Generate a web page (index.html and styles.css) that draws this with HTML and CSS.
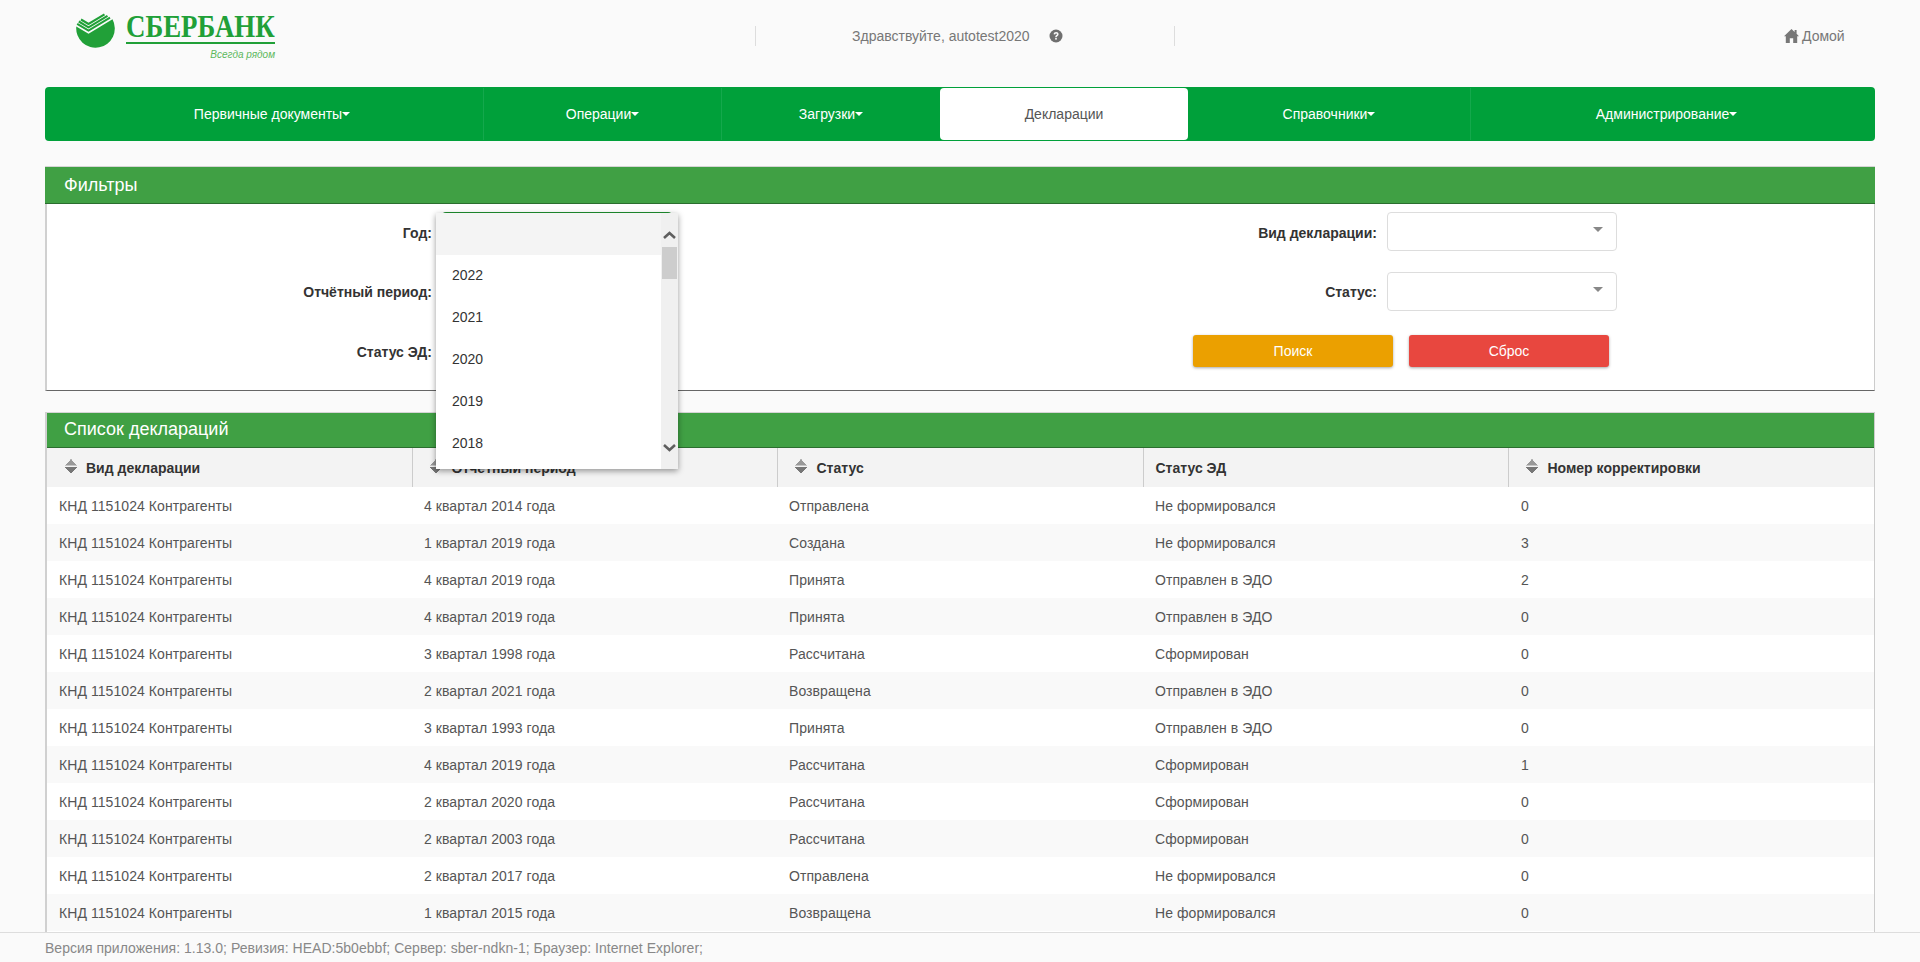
FILE: index.html
```html
<!DOCTYPE html>
<html lang="ru">
<head>
  <meta charset="UTF-8">
  <title>Декларации</title>
  <link rel="stylesheet" href="styles.css">
</head>
<body>
  <div class="page">
    <header class="top">
      <a class="logo" href="#">
        <svg class="logo-mark" viewBox="0 0 40 38" width="40" height="38">
          <path d="M0.3 16.5 L12.5 23.7 L36.5 9.3 A19.3 19.3 0 1 1 0.3 16.5 Z" fill="#21a038"/>
          <g fill="none" stroke="#21a038" stroke-width="2.1">
            <path d="M1.2 13.8 L12.5 20.6 L34 7.7"/>
            <path d="M2.8 11.5 L12.5 17.3 L31.5 5.9"/>
            <path d="M5 9.5 L12.5 14 L28.5 4.4"/>
          </g>
        </svg>
        <div class="logo-text">
          <div class="logo-name"><span>СБЕРБАНК</span></div>
          <div class="logo-slogan">Всегда рядом</div>
        </div>
      </a>
      <div class="greeting">
        <span>Здравствуйте, autotest2020</span>
        <svg class="help-icon" viewBox="0 0 14 14" width="14" height="14">
          <circle cx="7" cy="7" r="6.5" fill="#6f6f6f"/>
          <path d="M4.6 5.3 C4.7 3.8 5.8 3.1 7.1 3.1 C8.5 3.1 9.6 3.9 9.6 5.2 C9.6 6.9 7.7 6.9 7.7 8.2 L6.2 8.2 C6.2 6.2 8 6.3 8 5.3 C8 4.8 7.6 4.5 7.1 4.5 C6.5 4.5 6.2 4.9 6.1 5.5 Z" fill="#fafafa"/>
          <rect x="6.2" y="9" width="1.6" height="1.6" fill="#fafafa"/>
        </svg>
      </div>
      <a class="home" href="#">
        <svg viewBox="0 0 15 14" width="15" height="14">
          <path d="M7.5 0 L10.6 2.9 L10.6 1 L12.6 1 L12.6 4.8 L15 7.2 L13.2 7.2 L13.2 14 L9.2 14 L9.2 9.2 L5.8 9.2 L5.8 14 L1.8 14 L1.8 7.2 L0 7.2 Z" fill="#777"/>
        </svg>
        <span>Домой</span>
      </a>
    </header>

    <nav class="menu">
      <a class="menu-item has-caret" href="#">Первичные документы</a>
      <a class="menu-item has-caret" href="#">Операции</a>
      <a class="menu-item has-caret" href="#">Загрузки</a>
      <a class="menu-item active" href="#">Декларации</a>
      <a class="menu-item has-caret" href="#">Справочники</a>
      <a class="menu-item has-caret" href="#">Администрирование</a>
    </nav>

    <section class="panel filters">
      <h2 class="panel-title">Фильтры</h2>
      <div class="filter-body">
        <div class="filter-col">
          <div class="field"><label>Год:</label><div class="select year-select"></div></div>
          <div class="field"><label>Отчётный период:</label><div class="select"></div></div>
          <div class="field"><label>Статус ЭД:</label><div class="select"></div></div>
        </div>
        <div class="filter-col filter-col-right">
          <div class="field"><label>Вид декларации:</label><div class="select"><span class="select-caret"></span></div></div>
          <div class="field"><label>Статус:</label><div class="select"><span class="select-caret"></span></div></div>
          <div class="buttons">
            <button class="btn btn-search">Поиск</button>
            <button class="btn btn-reset">Сброс</button>
          </div>
        </div>
      </div>
    </section>

    <section class="panel list">
      <h2 class="panel-title">Список деклараций</h2>
      <table class="grid">
        <colgroup>
          <col class="col-type"><col class="col-period"><col class="col-status"><col class="col-ed"><col>
        </colgroup>
        <thead>
          <tr>
            <th><span class="sort"></span>Вид декларации</th>
            <th><span class="sort"></span>Отчётный период</th>
            <th><span class="sort"></span>Статус</th>
            <th>Статус ЭД</th>
            <th><span class="sort"></span>Номер корректировки</th>
          </tr>
        </thead>
        <tbody>
          <tr><td>КНД 1151024 Контрагенты</td><td>4 квартал 2014 года</td><td>Отправлена</td><td>Не формировался</td><td>0</td></tr>
          <tr><td>КНД 1151024 Контрагенты</td><td>1 квартал 2019 года</td><td>Создана</td><td>Не формировался</td><td>3</td></tr>
          <tr><td>КНД 1151024 Контрагенты</td><td>4 квартал 2019 года</td><td>Принята</td><td>Отправлен в ЭДО</td><td>2</td></tr>
          <tr><td>КНД 1151024 Контрагенты</td><td>4 квартал 2019 года</td><td>Принята</td><td>Отправлен в ЭДО</td><td>0</td></tr>
          <tr><td>КНД 1151024 Контрагенты</td><td>3 квартал 1998 года</td><td>Рассчитана</td><td>Сформирован</td><td>0</td></tr>
          <tr><td>КНД 1151024 Контрагенты</td><td>2 квартал 2021 года</td><td>Возвращена</td><td>Отправлен в ЭДО</td><td>0</td></tr>
          <tr><td>КНД 1151024 Контрагенты</td><td>3 квартал 1993 года</td><td>Принята</td><td>Отправлен в ЭДО</td><td>0</td></tr>
          <tr><td>КНД 1151024 Контрагенты</td><td>4 квартал 2019 года</td><td>Рассчитана</td><td>Сформирован</td><td>1</td></tr>
          <tr><td>КНД 1151024 Контрагенты</td><td>2 квартал 2020 года</td><td>Рассчитана</td><td>Сформирован</td><td>0</td></tr>
          <tr><td>КНД 1151024 Контрагенты</td><td>2 квартал 2003 года</td><td>Рассчитана</td><td>Сформирован</td><td>0</td></tr>
          <tr><td>КНД 1151024 Контрагенты</td><td>2 квартал 2017 года</td><td>Отправлена</td><td>Не формировался</td><td>0</td></tr>
          <tr><td>КНД 1151024 Контрагенты</td><td>1 квартал 2015 года</td><td>Возвращена</td><td>Не формировался</td><td>0</td></tr>
        </tbody>
      </table>
    </section>

    <footer class="footer">Версия приложения: 1.13.0; Ревизия: HEAD:5b0ebbf; Сервер: sber-ndkn-1; Браузер: Internet Explorer;</footer>
  </div>

  <!-- open dropdown of the year select -->
  <div class="dropdown">
    <ul class="dropdown-list">
      <li class="selected"></li>
      <li>2022</li>
      <li>2021</li>
      <li>2020</li>
      <li>2019</li>
      <li>2018</li>
    </ul>
    <div class="scrollbar">
      <svg class="scroll-arrow" viewBox="0 0 13 8" width="13" height="8"><path d="M1 7 L6.5 2 L12 7" fill="none" stroke="#5f5f5f" stroke-width="2.6"/></svg>
      <div class="scroll-track"><div class="scroll-thumb"></div></div>
      <svg class="scroll-arrow" viewBox="0 0 13 8" width="13" height="8"><path d="M1 1 L6.5 6 L12 1" fill="none" stroke="#5f5f5f" stroke-width="2.6"/></svg>
    </div>
  </div>
</body>
</html>
```

FILE: styles.css
```css
* {
  box-sizing: border-box;
}

html, body {
  margin: 0;
  height: 100%;
  overflow: hidden;
}

body {
  background: #fafafa;
  color: #333;
  font-family: "Liberation Sans", Arial, sans-serif;
  font-size: 14px;
}

a {
  text-decoration: none;
}

.page {
  height: 962px;
  display: flex;
  flex-direction: column;
}

/* top line */
.top {
  height: 87px;
  flex: none;
  display: flex;
  align-items: flex-start;
  color: #777;
}

.logo {
  width: 755px;
  padding: 10px 0 0 76px;
  display: flex;
  gap: 10px;
}

.logo-text {
  width: 149px;
}

.logo-name {
  font-family: "Liberation Serif", serif;
  font-size: 32px;
  font-weight: bold;
  line-height: 30px;
  height: 34px;
  padding-top: 1px;
  color: #21a038;
  border-bottom: 2px solid #21a038;
  white-space: nowrap;
}

.logo-name span {
  display: inline-block;
  transform: scaleX(0.84);
  transform-origin: left;
}

.logo-slogan {
  margin-top: 5px;
  font-size: 10px;
  font-style: italic;
  line-height: 12px;
  text-align: right;
  color: #5cb85c;
}

.greeting {
  width: 420px;
  height: 20px;
  margin-top: 26px;
  border-left: 1px solid #ddd;
  border-right: 1px solid #ddd;
  padding-left: 96px;
  display: flex;
  align-items: center;
  gap: 19px;
}

.home {
  margin: 28px 0 0 609px;
  color: #777;
  display: flex;
  align-items: center;
  gap: 3px;
}

/* main menu */
.menu {
  flex: none;
  height: 54px;
  margin: 0 45px;
  padding: 1px 0;
  background: #00a03a;
  border-radius: 4px;
  display: grid;
  grid-template-columns: 439px 238px 218px 248px 283px 1fr;
}

.menu-item {
  display: flex;
  align-items: center;
  justify-content: center;
  color: #fff;
  border-right: 1px solid #14a84c;
}

.menu-item:first-child {
  padding-left: 16px;
}

.menu-item:nth-child(3),
.menu-item:nth-child(4) {
  border-right: 0;
}

.menu-item:last-child {
  padding-right: 13px;
  border-right: 0;
}

.menu-item.active {
  background: #fff;
  color: #555;
  border-radius: 4px;
}

.has-caret::after {
  content: "";
  border-top: 4px solid #fff;
  border-left: 4px solid transparent;
  border-right: 4px solid transparent;
}

/* panels */
.panel {
  flex: none;
  margin: 0 45px;
  background: #fff;
  border-left: 2px solid #d0d0d0;
  border-right: 1px solid #ccc;
}

.panel-title {
  margin: 0 -1px 0 -2px;
  padding: 0 19px;
  background: #40a044;
  border-top: 1px solid #d5d5d5;
  border-bottom: 1px solid #2b6e2f;
  color: #fff;
  font-size: 18px;
  font-weight: normal;
}

.filters {
  margin-top: 25px;
  border-bottom: 1px solid #666;
}

.filters .panel-title {
  height: 38px;
  line-height: 36px;
}

.filter-body {
  height: 186px;
  display: flex;
}

.filter-col {
  width: 913px;
  flex: none;
  padding-top: 8px;
}

.field {
  height: 39px;
  margin-bottom: 21px;
  display: flex;
  align-items: center;
}

.field label {
  width: 385px;
  padding-top: 2px;
  text-align: right;
  font-weight: bold;
}

.filter-col .field:nth-child(2) {
  margin-bottom: 20px;
}

.filter-col .field:nth-child(2) label {
  padding-top: 0;
}

.filter-col-right .field:nth-child(2) {
  margin-bottom: 0;
}

.filter-col-right .field label {
  width: 417px;
}

.select {
  position: relative;
  width: 230px;
  height: 39px;
  margin-left: 10px;
  background: #fff;
  border: 1px solid #ddd;
  border-radius: 4px;
}

.year-select {
  border-top-color: #1f8f2f;
}

.select-caret {
  position: absolute;
  top: 14px;
  right: 13px;
  border-top: 5px solid #888;
  border-left: 5px solid transparent;
  border-right: 5px solid transparent;
}

.buttons {
  display: flex;
  gap: 16px;
  margin: 24px 0 0 233px;
}

.btn {
  width: 200px;
  height: 32px;
  border: 0;
  border-radius: 3px;
  color: #fff;
  font-family: inherit;
  font-size: 14px;
  box-shadow: 0 1px 3px rgba(0, 0, 0, 0.35);
}

.btn-search {
  background: #eba000;
}

.btn-reset {
  background: #e8473f;
}

.list {
  margin-top: 21px;
  flex: 1;
  overflow: hidden;
}

.list .panel-title {
  height: 36px;
  line-height: 33px;
}

/* table */
.grid {
  width: 100%;
  border-collapse: collapse;
  table-layout: fixed;
  color: #555;
}

.col-type {
  width: 365px;
}

.col-period {
  width: 365px;
}

.col-status {
  width: 366px;
}

.col-ed {
  width: 365px;
}

.grid th {
  height: 39px;
  padding: 0 12px;
  background: #f3f3f3;
  border-right: 1px solid #ccc;
  color: #333;
  font-weight: bold;
  text-align: left;
}

.grid th:last-child {
  border-right: 0;
}

.grid td {
  height: 37px;
  padding: 0 12px;
  letter-spacing: 0.07px;
}

.grid td:last-child {
  padding-left: 13px;
}

.grid tbody tr:nth-child(even) {
  background: #f9f9f9;
}

.sort {
  display: inline-block;
  width: 12px;
  height: 14px;
  margin: 0 10px 0 5px;
  vertical-align: 0;
  background:
    linear-gradient(to bottom right, transparent 49%, #999 50%) 0 0 / 6px 6.5px no-repeat,
    linear-gradient(to bottom left, transparent 49%, #999 50%) 6px 0 / 6px 6.5px no-repeat,
    linear-gradient(to top right, transparent 49%, #777 50%) 0 7.5px / 6px 6.5px no-repeat,
    linear-gradient(to top left, transparent 49%, #777 50%) 6px 7.5px / 6px 6.5px no-repeat;
}

.grid th:first-child .sort {
  margin: 0 9px 0 6px;
}

.footer {
  flex: none;
  height: 30px;
  padding: 0 45px;
  background: #fafafa;
  border-top: 1px solid #ddd;
  color: #888;
  line-height: 30px;
  letter-spacing: 0.03px;
}

/* open dropdown */
.dropdown {
  position: absolute;
  left: 436px;
  top: 213px;
  width: 242px;
  height: 256px;
  display: flex;
  background: #fff;
  box-shadow: 0 2px 6px rgba(0, 0, 0, 0.4);
  overflow: hidden;
}

.dropdown-list {
  flex: 1;
  margin: 0;
  padding: 0;
  list-style: none;
}

.dropdown-list li {
  height: 42px;
  padding-left: 16px;
  line-height: 41px;
}

.dropdown-list .selected {
  background: #f4f4f4;
}

.scrollbar {
  width: 17px;
  background: #f0f0f0;
  display: flex;
  flex-direction: column;
  align-items: center;
  padding: 18px 0 17px;
}

.scroll-track {
  flex: 1;
  width: 100%;
  padding: 8px 1px 0;
}

.scroll-thumb {
  height: 32px;
  background: #cdcdcd;
}
```
